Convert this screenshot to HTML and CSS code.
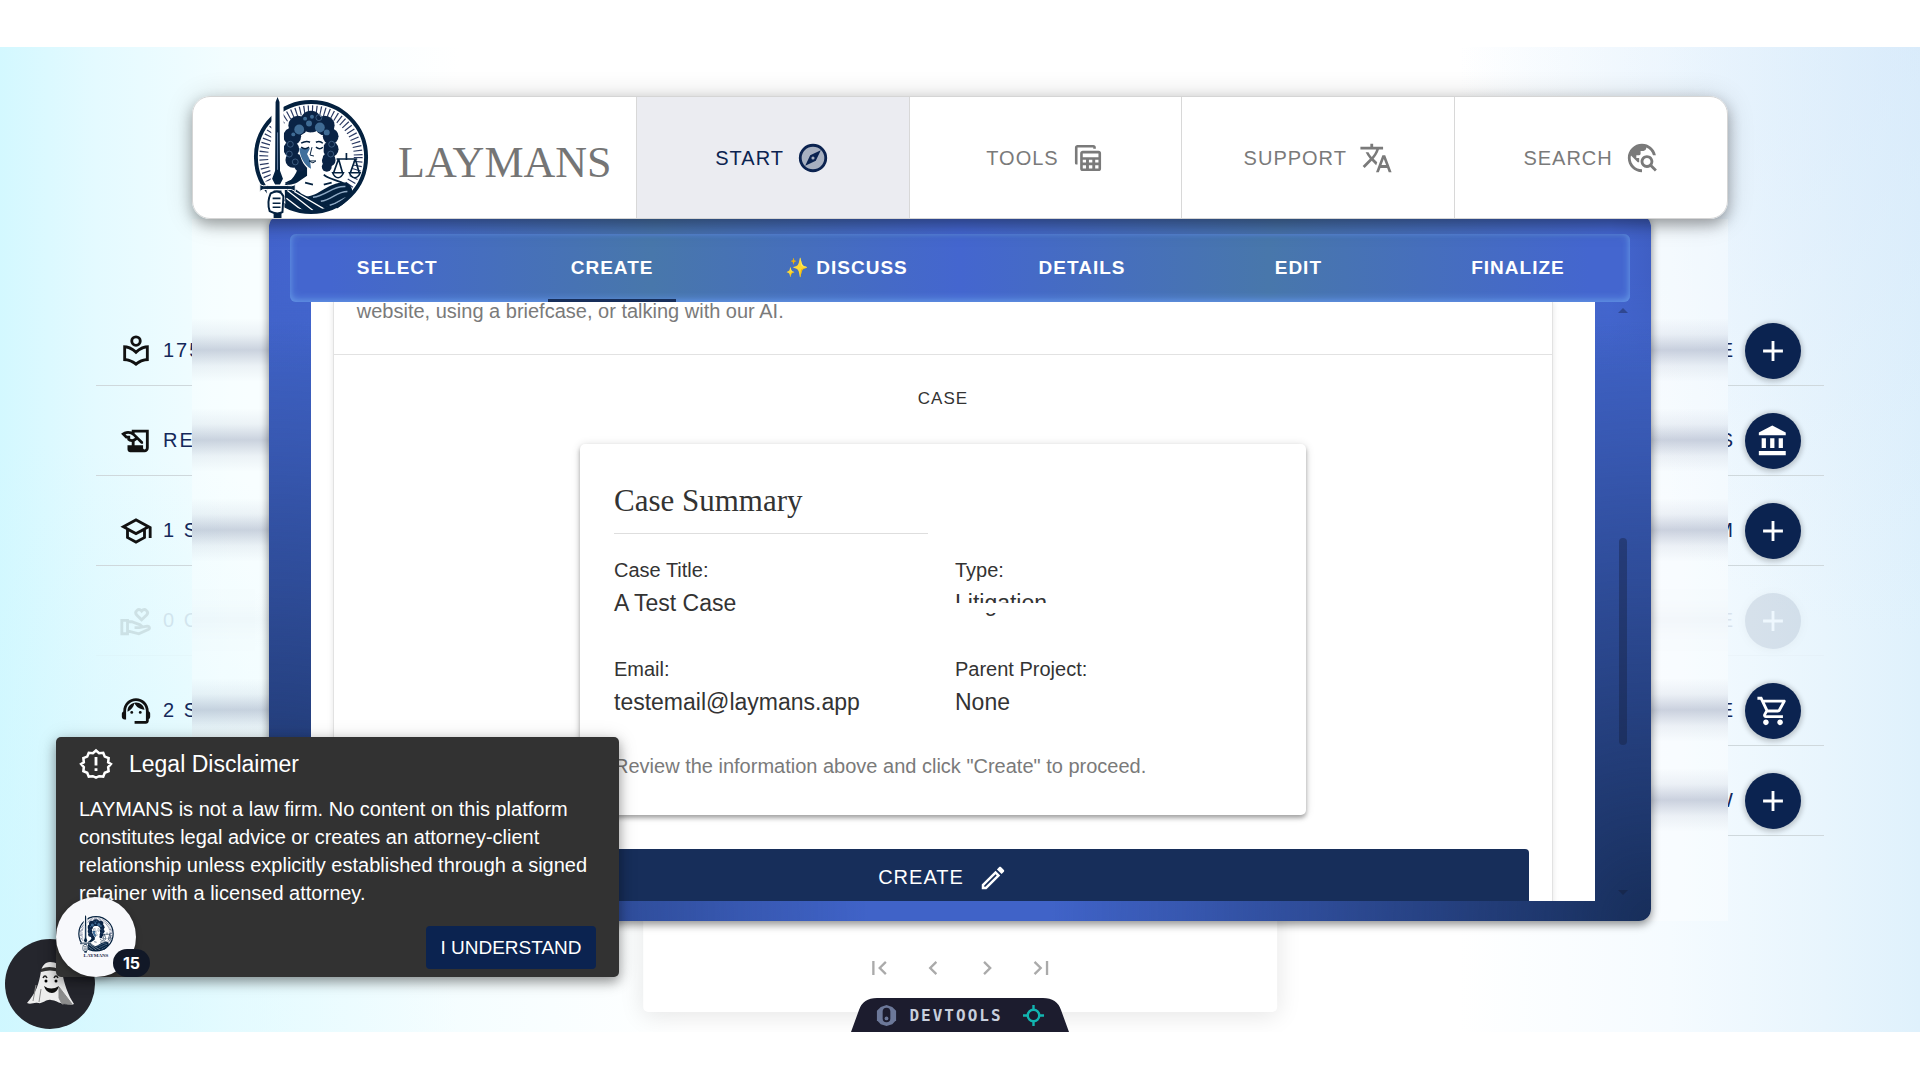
FILE: index.html
```
<!DOCTYPE html>
<html lang="en">
<head>
	<meta charset="utf-8">
	<meta name="viewport" content="width=device-width,initial-scale=1">
	<title>Laymans</title>
	<link rel="stylesheet" href="styles.css">
</head>
<body>

<!-- shared symbols -->
<svg class="symbols" aria-hidden="true">
	<symbol id="plus" viewBox="0 0 24 24"><path d="M19 13h-6v6h-2v-6H5v-2h6V5h2v6h6z"/></symbol>
	<symbol id="seal" viewBox="0 0 124 124">
		<circle cx="62" cy="61" r="56" fill="#fff"/>
		<circle cx="62" cy="61" r="48" fill="none" stroke="#2b3a63" stroke-width="9" stroke-dasharray="1.200 3"/>
		<circle cx="62" cy="61" r="42" fill="#fff"/>
		<!-- shoulders and robe -->
		<path d="M33 88c8-7 17-7 23-11l15-1c8 6 20 5 28 14l3 4-8 12-30 10-28-8z" fill="#fff"/>
		<path d="M35 91c6-1 11 2 17 7l32 16c-18 6-36 4-48-5z" fill="#04213f"/>
		<path d="M56 101c14 1 22-15 42-14 5 3 8 8 4 14-4 6-8 9-13 12-12 0-24-5-33-12z" fill="#04213f"/>
		<path d="M38 95l28 22M37 103l17 13M45 96l34 20" fill="none" stroke="#fff" stroke-width="1.300"/>
		<path d="M64 102c14-2 20-12 33-11M72 106c12-2 16-10 27-10M81 110c9-2 12-7 18-8" fill="none" stroke="#8fa9c4" stroke-width="1.500"/>
		<path d="M36 88c7-5 16-4 21-9M75 79c5 5 14 5 22 10M56 87l8 2M75 89l8-2" fill="none" stroke="#04213f" stroke-width="1.800"/>
		<path d="M50 58l8 14v8l-10 7c-6 3-10 2-14 3 12-6 17-18 16-32z" fill="#04213f"/>
		<!-- hair -->
		<g fill="#0a2345">
			<circle cx="62" cy="25" r="11"/><circle cx="49" cy="29" r="10"/><circle cx="76" cy="29" r="10"/>
			<circle cx="43" cy="40" r="9"/><circle cx="82" cy="40" r="8"/><circle cx="42" cy="53" r="8"/>
			<circle cx="82" cy="53" r="8"/><circle cx="44" cy="64" r="8"/><circle cx="80" cy="64" r="7"/>
			<circle cx="51" cy="70" r="6"/><circle cx="78" cy="71" r="5"/>
		</g>
		<g fill="#3f6b94">
			<circle cx="50" cy="33" r="5"/><circle cx="60" cy="27" r="3"/><circle cx="71" cy="31" r="5"/>
			<circle cx="78" cy="36" r="3"/><circle cx="63" cy="20" r="2"/><circle cx="56" cy="22" r="2"/><circle cx="44" cy="38" r="2"/>
		</g>
		<g fill="none" stroke="#46678c" stroke-width=".8">
			<circle cx="41" cy="48" r="3"/><circle cx="40" cy="58" r="3"/><circle cx="46" cy="66" r="3"/>
			<circle cx="83" cy="48" r="3"/><circle cx="82" cy="58" r="3"/><circle cx="70" cy="21" r="3"/>
		</g>
		<!-- face -->
		<path d="M50 48c2-6 7-9 13-12 6 4 12 7 12 15 0 13-4 21-11 24-8-2-13-11-14-21z" fill="#fff"/>
		<path d="M50 52c1 9 5 17 12 21l-1-9-3-6 3-6z" fill="#3f6f9c"/>
		<path d="M52 47q5-3 9-1M67 46q4-2 7 1M52 51q4 3 8 0M67 51q4 3 7 0" fill="none" stroke="#04213f" stroke-width="1.500"/>
		<path d="M63 51l-2 8 4 1M60 65h7l-3 2z" fill="none" stroke="#04213f"/>
		<path d="M60 75l1 8 11-1v-11l-7 5z" fill="#fff"/>
		<!-- scales -->
		<path d="M98 57v7M88 63h21M90 63l-5 14M90 63l4 14M107 63l-5 14M107 63l4 14" fill="none" stroke="#04213f" stroke-width="1.700"/>
		<path d="M84 77h11q-2 5-5.500 5T84 77zM101 77h11q-2 5-5.500 5t-5.500-5z" fill="#fff" stroke="#04213f" stroke-width="1.600"/>
		<circle cx="62" cy="61" r="56" fill="none" stroke="#04213f" stroke-width="4"/>
		<!-- sword and hand -->
		<path d="M24 4l4-4 4 4 1 84v36H22l-4-36h5z" fill="#fff" stroke="#fff" stroke-width="4"/>
		<path d="M26 5l2-5 2 5 .5 70 3 8-3 6h-5l-3-6 3-8z" fill="#04213f"/>
		<path d="M28 36v38" stroke="#6d87a8" stroke-width="1"/>
		<path d="M10 89q3 2 8 1h20q5 1 8-1v7q-4-3-8-2H18q-5-1-8 2z" fill="#04213f" stroke="#fff" stroke-width="1"/>
		<path d="M24 95h8v28h-8z" fill="#04213f"/>
		<path d="M21 98q7-4 11 0l2 3-1 16q-6 3-13-1-3-9 1-18z" fill="#fff" stroke="#04213f" stroke-width="2"/>
		<path d="M23 103h8M23 108h8M23 112h8" stroke="#04213f" stroke-width="1.600"/>
	</symbol>
</svg>

<main class="stage">

	<header class="navbar">
		<a class="brand" href="#">
			<svg class="brand-logo" aria-hidden="true"><use href="#seal"/></svg>
			<span class="brand-name">LAYMANS</span>
		</a>
		<button class="nav-item active" type="button">START
			<svg class="icon" viewBox="0 0 24 24"><circle cx="12" cy="12" r="9" fill-opacity=".3" stroke-width="2" stroke="currentColor"/><path fill-rule="evenodd" d="M6.500 17.500l3.510-7.490L17.500 6.500l-3.510 7.490zM12 10.900a1.100 1.100 0 1 0 0 2.200 1.100 1.100 0 0 0 0-2.200z"/></svg>
		</button>
		<button class="nav-item" type="button">TOOLS
			<svg class="icon" viewBox="-1 -1 26 26"><path d="M4 17H3a1 1 0 0 1-1-1V4c0-1.100.9-2 2-2h12a2 2 0 0 1 2 2v1h-2V4H4z"/><path fill-rule="evenodd" d="M8 6.500h12a2 2 0 0 1 2 2V20a2 2 0 0 1-2 2H8a2 2 0 0 1-2-2V8.500c0-1.100.9-2 2-2zm0 2v3h12v-3zm0 4.800v2.200h2.500v-2.200zm4.700 0v2.200h2.600v-2.200zm4.800 0v2.200H20v-2.200zM8 17.600V20h2.500v-2.400zm4.700 0V20h2.600v-2.400zm4.800 0V20H20v-2.400z"/></svg>
		</button>
		<button class="nav-item" type="button">SUPPORT
			<svg class="icon" viewBox="0 0 24 24"><path d="M12.870 15.070l-2.540-2.510.03-.03c1.740-1.940 2.980-4.170 3.710-6.530H17V4h-7V2H8v2H1v1.990h11.170C11.500 7.920 10.440 9.750 9 11.350 8.070 10.320 7.300 9.190 6.690 8h-2c.73 1.630 1.730 3.170 2.980 4.560l-5.090 5.020L4 19l5-5 3.110 3.110.76-2.040zM18.500 10h-2L12 22h2l1.120-3h4.750L21 22h2l-4.500-12zm-2.620 7l1.620-4.330L19.120 17h-3.240z"/></svg>
		</button>
		<button class="nav-item" type="button">SEARCH
			<svg class="icon" viewBox="0 0 24 24"><path d="M19.300 16.900c.4-.7.7-1.500.7-2.400 0-2.500-2-4.500-4.500-4.500S11 12 11 14.500s2 4.500 4.500 4.500c.9 0 1.700-.3 2.400-.7l3.200 3.200 1.400-1.400-3.200-3.200zm-3.800.1c-1.400 0-2.500-1.100-2.500-2.500s1.100-2.500 2.500-2.500 2.500 1.100 2.500 2.500-1.100 2.500-2.500 2.500zM12 20v2C6.480 22 2 17.520 2 12S6.480 2 12 2c4.840 0 8.870 3.440 9.800 8h-2.070c-.64-2.460-2.400-4.470-4.730-5.410V5c0 1.100-.9 2-2 2h-2v2c0 .55-.45 1-1 1H8v2h2v3H9l-4.790-4.790C4.080 10.790 4 11.380 4 12c0 4.410 3.590 8 8 8z"/></svg>
		</button>
	</header>

	<div class="frost"></div>

	<div class="lists">
		<ul class="list">
			<li><svg class="icon" viewBox="0 0 24 24"><circle cx="12" cy="5" r="3" fill="none" stroke="currentColor" stroke-width="2"/><path d="M12 11.550C9.640 9.350 6.480 8 3 8v11c3.480 0 6.640 1.350 9 3.550 2.360-2.190 5.520-3.550 9-3.550V8c-3.480 0-6.640 1.350-9 3.550zm7 5.580c-2.530.34-4.930 1.300-7 2.820-2.060-1.520-4.470-2.490-7-2.830v-6.950c2.100.38 4.050 1.350 5.640 2.830L12 14.280l1.360-1.270c1.590-1.480 3.540-2.450 5.640-2.830z"/></svg><span class="label">175</span></li>
			<li><svg class="icon" viewBox="0 0 24 24"><path d="M9 4v1.380c-.83-.33-1.720-.5-2.610-.5-1.790 0-3.580.68-4.950 2.050l3.330 3.330h1.110v1.110c.86.86 1.980 1.310 3.110 1.360V15H6v3c0 1.100.9 2 2 2h10c1.660 0 3-1.340 3-3V4H9zm-1.110 6.410V8.260H5.610L4.570 7.220a5.070 5.070 0 0 1 1.820-.34c1.340 0 2.590.52 3.540 1.460l1.410 1.410-.2.2c-.51.51-1.190.8-1.920.8-.47 0-.93-.12-1.330-.34zM19 17c0 .55-.45 1-1 1s-1-.45-1-1v-2h-6v-2.590c.57-.23 1.100-.57 1.560-1.030l.2-.2L15.590 14H17v-1.410l-6-5.970V6h8v11z"/></svg><span class="label">RE</span></li>
			<li><svg class="icon" viewBox="0 0 24 24"><path d="M12 3L1 9l4 2.180v6L12 21l7-3.820v-6l2-1.090V17h2V9L12 3zm6.820 6L12 12.720 5.180 9 12 5.280 18.820 9zM17 15.990l-5 2.730-5-2.730v-3.720L12 15l5-2.730v3.720z"/></svg><span class="label">1 S</span></li>
			<li class="off"><svg class="icon" viewBox="0 0 24 24"><path d="M2 11.500h4V21H2zM6 12.500h3l6 2.200c1.200.6.900 2-.4 2H11M15 16.500l5-.9c1.500 0 2 1.600 1 2.200l-7 3.200-8-2M16 11.200l-3.500-3.400c-2-2.400 1.200-5.300 3.500-2.800 2.300-2.500 5.500.4 3.500 2.800z" fill="none" stroke="currentColor" stroke-width="2"/></svg><span class="label">0 C</span></li>
			<li><svg class="icon" viewBox="0 0 24 24"><path d="M21 12.220C21 6.730 16.740 3 12 3c-4.690 0-9 3.650-9 9.280-.6.34-1 .98-1 1.720v2c0 1.100.9 2 2 2h1v-6.100c0-3.870 3.130-7 7-7s7 3.130 7 7V19h-8v2h8c1.100 0 2-.9 2-2v-1.220c.59-.31 1-.92 1-1.640v-2.300c0-.7-.41-1.310-1-1.620z"/><circle cx="9" cy="13" r="1"/><circle cx="15" cy="13" r="1"/><path d="M18 11.030C17.520 8.180 15.040 6 12.050 6c-3.030 0-6.290 2.510-6.030 6.450 2.470-1.010 4.330-3.210 4.860-5.890 1.310 2.630 4 4.440 7.120 4.470z"/></svg><span class="label">2 S</span></li>
		</ul>
		<ul class="list list-right">
			<li><span class="label">E</span><button type="button" aria-label="Add"><svg class="icon"><use href="#plus"/></svg></button></li>
			<li><span class="label">S</span><button type="button" aria-label="Bank"><svg class="icon" viewBox="0 0 24 24"><path d="M4 10v7h3v-7H4zm6 0v7h3v-7h-3zM2 22h19v-3H2v3zm14-12v7h3v-7h-3zm-4.500-9L2 6v2h19V6l-9.500-5z"/></svg></button></li>
			<li><span class="label">M</span><button type="button" aria-label="Add"><svg class="icon"><use href="#plus"/></svg></button></li>
			<li class="off"><span class="label">E</span><button type="button" aria-label="Add" disabled><svg class="icon"><use href="#plus"/></svg></button></li>
			<li><span class="label">E</span><button type="button" aria-label="Cart"><svg class="icon" viewBox="0 0 24 24"><path d="M15.550 13c.75 0 1.410-.41 1.750-1.030l3.580-6.490c.37-.66-.11-1.480-.87-1.480H5.210l-.94-2H1v2h2l3.600 7.590-1.350 2.440C4.520 15.370 5.480 17 7 17h12v-2H7l1.100-2h7.450zM6.160 6h12.150l-2.760 5H8.530L6.160 6zM7 18c-1.100 0-1.990.9-1.990 2S5.900 22 7 22s2-.9 2-2-.9-2-2-2zm10 0c-1.100 0-1.990.9-1.990 2s.89 2 1.990 2 2-.9 2-2-.9-2-2-2z"/></svg></button></li>
			<li><span class="label">W</span><button type="button" aria-label="Add"><svg class="icon"><use href="#plus"/></svg></button></li>
		</ul>
	</div>

	<nav class="pager" aria-label="Pages">
		<button type="button" aria-label="First"><svg viewBox="0 0 24 24"><path d="M18.410 16.590L13.820 12l4.590-4.590L17 6l-6 6 6 6zM6 6h2v12H6z"/></svg></button>
		<button type="button" aria-label="Previous"><svg viewBox="0 0 24 24"><path d="M15.410 7.410L14 6l-6 6 6 6 1.410-1.410L10.830 12z"/></svg></button>
		<button type="button" aria-label="Next"><svg viewBox="0 0 24 24"><path d="M10 6L8.590 7.410 13.170 12l-4.580 4.590L10 18l6-6z"/></svg></button>
		<button type="button" aria-label="Last"><svg viewBox="0 0 24 24"><path d="M5.590 7.410L10.180 12l-4.590 4.590L7 18l6-6-6-6zM16 6h2v12h-2z"/></svg></button>
	</nav>

	<section class="dialog">
		<div class="tabs" role="tablist">
			<button type="button" role="tab">SELECT</button>
			<button type="button" role="tab" class="selected" aria-selected="true">CREATE</button>
			<button type="button" role="tab">✨ DISCUSS</button>
			<button type="button" role="tab">DETAILS</button>
			<button type="button" role="tab">EDIT</button>
			<button type="button" role="tab">FINALIZE</button>
		</div>
		<div class="dialog-body">
			<div class="scroller">
				<div class="panel">
					<p class="intro">website, using a briefcase, or talking with our AI.</p>
					<div class="overline">CASE</div>
					<div class="summary">
						<h2>Case Summary</h2>
						<dl>
							<div><dt>Case Title:</dt><dd>A Test Case</dd></div>
							<div><dt>Type:</dt><dd class="masked">Litigation</dd></div>
							<div><dt>Email:</dt><dd>testemail@laymans.app</dd></div>
							<div><dt>Parent Project:</dt><dd>None</dd></div>
						</dl>
						<p>Review the information above and click "Create" to proceed.</p>
					</div>
					<button class="create" type="button">CREATE
						<svg class="icon" viewBox="0 0 24 24"><path d="M14.060 9.020l.92.92L5.920 19H5v-.92l9.060-9.060M17.660 3c-.25 0-.51.1-.7.29l-1.830 1.830 3.750 3.750 1.830-1.830c.39-.39.39-1.020 0-1.410l-2.340-2.340c-.2-.2-.45-.29-.71-.29zm-3.600 3.190L3 17.250V21h3.750L17.810 9.940l-3.750-3.750z"/></svg>
					</button>
				</div>
			</div>
			<div class="scrollbar"><span class="arrow up"></span><span class="thumb"></span><span class="arrow down"></span></div>
		</div>
	</section>

	<button class="ghost" type="button" aria-label="Assistant">
		<svg viewBox="0 0 90 90"><path d="M45 23c-5 0-8 4-9 9-2 13-5 22-14 32 4 2 7-1 11 0 5 1 8-4 13-3 5 0 8 4 13 3 3-1 6 3 10 1-6-9-10-20-12-33-1-6-6-9-12-9z" fill="#ededed"/><path d="M54 48l13 17c-4 1-7-1-10 0l-3-6zM31 46l-3 16M36 50l-2 13" fill="#8c8c8c" stroke="#8c8c8c"/><path d="M36 30q8-4 18 0v3q-9-3-18 0z" fill="#333"/><path d="M38 39q2-4 4 0M49 39q2-4 4 0" fill="none" stroke="#222" stroke-width="1.500"/><circle cx="41" cy="42" r="1.500"/><circle cx="51" cy="42" r="1.500"/><path d="M39 47q7 5 15 0-2 7-7 7-6 0-8-7z" fill="#111"/></svg>
	</button>

	<aside class="disclaimer">
		<h3><svg class="icon" viewBox="0 0 24 24"><path d="M12 2.500l2.200 1.900 2.900-.3 1.100 2.700 2.700 1.100-.3 2.900 1.900 1.200-1.900 2.200.3 2.900-2.700 1.100-1.100 2.700-2.900-.3-2.200 1-2.200-1-2.900.3-1.100-2.700-2.700-1.100.3-2.900L1.500 12l1.900-1.200-.3-2.900 2.700-1.100 1.100-2.700 2.900.3z" fill="none" stroke="currentColor" stroke-width="1.800"/><path d="M11 7h2v6h-2zM11 15h2v2h-2z"/></svg>Legal Disclaimer</h3>
		<p>LAYMANS is not a law firm. No content on this platform constitutes legal advice or creates an attorney-client relationship unless explicitly established through a signed retainer with a licensed attorney.</p>
		<button type="button">I UNDERSTAND</button>
	</aside>

	<button class="chat" type="button">
		<svg class="chat-logo" aria-hidden="true"><use href="#seal"/></svg>
		<span class="chat-name">LAYMANS</span>
		<span class="badge">15</span>
	</button>

	<button class="devtools" type="button">
		<svg viewBox="0 0 22 24"><path d="M11 1l6 2 4 4v10l-4 4-6 2-6-2-4-4V7l4-4z" fill="#6c7899"/><rect x="7" y="4" width="8" height="15" rx="4" fill="#1c1c2e"/><circle cx="11" cy="15" r="2" fill="#6c7899"/></svg>
		DEVTOOLS
		<svg viewBox="0 0 24 24" fill="none" stroke="#12b5b0" stroke-width="2.500"><circle cx="12" cy="12" r="6"/><path d="M12 1v6M12 17v6M1 12h6M17 12h6"/></svg>
	</button>

</main>
</body>
</html>
```
FILE: styles.css
```
:root {
	--navy: #0b2350;
	--deep: #172e5a;
	--blue: #4466cf;
	--teal: #4877ab;
	--text: #333;
	--muted: #7a7a7a;
}

* {
	box-sizing: border-box;
}

body {
	margin: 0;
	padding: 47px 0 48px;
	min-height: 100vh;
	display: flex;
	background: white;
	color: var(--text);
	font-family: "Liberation Sans", Arial, sans-serif;
	font-size: 20px;
}

button {
	border: 0;
	margin: 0;
	padding: 0;
	background: none;
	color: inherit;
	font: inherit;
	cursor: pointer;
}

h2, h3, p, ul, dl, dd {
	margin: 0;
	padding: 0;
}

.symbols {
	position: absolute;
	width: 0;
	height: 0;
}

.icon {
	width: 34px;
	height: 34px;
	fill: currentColor;
	flex: none;
}

.stage {
	position: relative;
	flex: 1;
	padding-top: 49px;
	overflow: hidden;
	background:
		radial-gradient(ellipse 36% 60% at 0 100%, rgba(205, 247, 255, .6), transparent),
		radial-gradient(ellipse 24% 60% at 100% 0, rgba(214, 232, 250, .6), transparent),
		linear-gradient(90deg, #d3f8ff 0, #e4faff 5%, #f3fdff 12%, #fff 24%, #fff 76%, #f5fbff 87%, #e8f5fd 95%, #dff1fc 100%);
}

/* top bar */
.navbar {
	position: relative;
	z-index: 3;
	display: grid;
	grid-template-columns: 443fr repeat(4, 273fr);
	width: 80%;
	height: 123px;
	margin: 0 auto;
	background: white;
	border: 1px solid #d5d5d5;
	border-radius: 18px;
	overflow: hidden;
}
.stage::before {
	content: "";
	position: absolute;
	z-index: 2;
	top: 49px;
	left: 10%;
	width: 80%;
	height: 123px;
	border-radius: 18px;
	box-shadow: 0 6px 14px rgba(0, 0, 0, .3), 0 2px 28px rgba(0, 0, 0, .16);
}

.brand {
	display: flex;
	align-items: center;
	gap: 25px;
	padding-left: 56px;
	color: #757575;
	text-decoration: none;
}
.brand-logo {
	width: 124px;
	height: 122px;
}
.brand-name {
	padding-top: 8px;
	font-family: "Liberation Serif", serif;
	font-size: 44px;
}

.nav-item {
	display: flex;
	align-items: center;
	justify-content: center;
	gap: 12px;
	border-left: 1px solid #d8d8d8;
	color: var(--muted);
	letter-spacing: 1px;
}
.nav-item.active {
	background: #ebecf1;
	color: var(--navy);
}

.lists {
	position: relative;
	display: flex;
	justify-content: space-between;
	padding: 77px 5% 0;
}
.list {
	width: 5vw;
	list-style: none;
	color: #14285a;
	letter-spacing: 2px;
}
.list li {
	position: relative;
	display: flex;
	align-items: center;
	gap: 10px;
	height: 90px;
	padding: 20px 0 0 23px;
	border-bottom: 1px solid #cfd8dc;
}
.list li::after {
	content: "";
	position: absolute;
	top: 22px;
	left: 100%;
	width: 80px;
	height: 64px;
	background: linear-gradient(transparent, rgba(40, 55, 105, .06) 25%, rgba(40, 55, 105, .22) 50%, rgba(40, 55, 105, .06) 75%, transparent);
}
.label {
	flex: 1;
	overflow: hidden;
	white-space: nowrap;
}
.list .icon {
	color: #111;
}
.list-right li {
	padding: 20px 23px 0 0;
}
.list-right li::after {
	right: 100%;
	left: auto;
}
.list-right .label {
	display: flex;
	justify-content: flex-end;
}
.list-right button {
	display: flex;
	align-items: center;
	justify-content: center;
	flex: none;
	width: 56px;
	height: 56px;
	border-radius: 50%;
	background: var(--navy);
	box-shadow: 0 1px 5px 2px rgba(0, 0, 0, .2);
}
.list-right .icon {
	color: white;
}
.list .off {
	opacity: .1;
}

.frost {
	position: absolute;
	top: 172px;
	right: 10%;
	bottom: 111px;
	left: 10%;
	background: rgba(255, 255, 255, .35);
}

.pager {
	position: absolute;
	left: 50%;
	bottom: 20px;
	width: 33%;
	height: 160px;
	padding-bottom: 30px;
	transform: translateX(-50%);
	display: flex;
	align-items: flex-end;
	justify-content: center;
	gap: 26px;
	border-radius: 5px;
	background: white;
	box-shadow: 0 4px 24px rgba(0, 0, 0, .1);
}
.pager button {
	width: 28px;
	height: 28px;
}
.pager svg {
	display: block;
	fill: #aaa;
}

/* dialog */
.dialog {
	position: absolute;
	z-index: 1;
	top: 168px;
	right: 14%;
	bottom: 111px;
	left: 14%;
	display: flex;
	flex-direction: column;
	padding: 19px 0 20px;
	border-radius: 12px;
	background:
		radial-gradient(circle at 0 100%, var(--deep), transparent 600px),
		radial-gradient(circle at 100% 100%, var(--deep), transparent 600px),
		linear-gradient(transparent 8%, #4063c8 22%),
		linear-gradient(90deg, #4263cc, #4466d0 5%, #4873ac 28%, #4466d0 50%, #4873ac 73%, #4466d0 97%, #3f5fc4);
	box-shadow: 0 4px 8px rgba(0, 0, 0, .35), 0 1px 10px rgba(0, 0, 0, .15);
}

.tabs {
	display: flex;
	justify-content: space-around;
	height: 68px;
	margin: 0 21px;
	border-radius: 6px;
	background: linear-gradient(90deg, var(--blue) 3%, var(--teal) 27%, var(--blue) 50%, var(--teal) 73%, var(--blue) 97%);
	box-shadow: inset 0 -2px 8px #6496e6, inset 0 0 5px #5580d8;
}
.tabs button {
	min-width: 128px;
	padding: 2px 22px 0;
	border-bottom: 3px solid transparent;
	color: white;
	font-size: 19px;
	font-weight: bold;
	letter-spacing: 1px;
}
.tabs .selected {
	border-bottom-color: var(--deep);
}

.dialog-body {
	display: flex;
	flex: 1;
	min-height: 0;
	padding-left: 42px;
}
.scroller {
	flex: 1;
	padding: 0 42px 0 22px;
	overflow: hidden;
	background: white;
}
.panel {
	display: flex;
	flex-direction: column;
	padding: 0 23px 24px;
	border: 1px solid #e2e2e2;
	border-width: 0 1px;
	box-shadow: 0 0 6px rgba(0, 0, 0, .1);
}
.intro {
	margin: 0 -23px;
	padding: 0 23px 34px;
	border-bottom: 1px solid #e2e2e2;
	color: var(--muted);
	line-height: 18px;
}
.overline {
	padding: 32px 0 33px;
	font-size: 17px;
	line-height: 24px;
	letter-spacing: 1px;
	text-align: center;
}

.summary {
	align-self: center;
	width: 100%;
	max-width: 726px;
	padding: 36px 34px 35px;
	border-radius: 5px;
	background: white;
	box-shadow: 0 3px 4px rgba(0, 0, 0, .3), 0 1px 10px rgba(0, 0, 0, .14);
}
.summary h2 {
	width: 314px;
	padding-bottom: 11px;
	border-bottom: 1px solid #dedede;
	font-family: "Liberation Serif", serif;
	font-size: 31px;
	font-weight: normal;
	line-height: 42px;
}
.summary dl {
	display: grid;
	grid-template-columns: 1fr 1fr;
	gap: 34px 24px;
	padding: 20px 0 34px;
}
.summary dt {
	line-height: 33px;
}
.summary dd {
	font-size: 23px;
	line-height: 32px;
}
.summary p {
	color: var(--muted);
	line-height: 28px;
}
/* blank strip running over the value */
.masked {
	position: relative;
}
.masked::after {
	content: "";
	position: absolute;
	top: 16px;
	left: 0;
	right: 0;
	height: 10px;
	background: white;
}

.create {
	display: flex;
	align-items: center;
	justify-content: center;
	gap: 14px;
	height: 57px;
	margin-top: 34px;
	border-radius: 4px;
	background: var(--deep);
	color: white;
	letter-spacing: 1px;
}
.create .icon {
	width: 30px;
	height: 30px;
}

.scrollbar {
	display: flex;
	flex-direction: column;
	align-items: center;
	justify-content: space-between;
	width: 56px;
	padding: 6px 0;
}
.thumb {
	width: 8px;
	height: 207px;
	margin-top: 80px;
	border-radius: 4px;
	background: rgba(20, 30, 60, .4);
}
.arrow {
	border: 5px solid transparent;
}
.up {
	border-top: 0;
	border-bottom-color: rgba(20, 30, 60, .4);
}
.down {
	border-bottom: 0;
	border-top-color: rgba(20, 30, 60, .5);
}

/* floating widgets */
.disclaimer {
	position: absolute;
	z-index: 5;
	left: 56px;
	bottom: 55px;
	display: flex;
	flex-direction: column;
	width: 563px;
	padding: 10px 23px 8px;
	border-radius: 5px;
	background: #323232;
	color: white;
	box-shadow: 0 5px 12px rgba(0, 0, 0, .35), 0 2px 20px rgba(0, 0, 0, .15);
}
.disclaimer h3 {
	display: flex;
	align-items: center;
	gap: 16px;
	font-size: 23px;
	font-weight: normal;
}
.disclaimer p {
	padding: 14px 0 19px;
	line-height: 28px;
}
.disclaimer button {
	align-self: flex-end;
	width: 170px;
	height: 43px;
	border-radius: 4px;
	background: var(--navy);
	font-size: 19px;
}

.ghost {
	position: absolute;
	z-index: 4;
	left: 5px;
	bottom: 3px;
	width: 90px;
	height: 90px;
	border-radius: 50%;
	background: #25262d;
}
.ghost svg {
	display: block;
}

.chat {
	position: absolute;
	z-index: 6;
	left: 56px;
	bottom: 55px;
	display: flex;
	flex-direction: column;
	align-items: center;
	justify-content: center;
	width: 80px;
	height: 80px;
	border-radius: 50%;
	background: #f8f9fc;
	box-shadow: 0 2px 6px rgba(0, 0, 0, .3);
}
.chat-logo {
	width: 38px;
	height: 38px;
}
.chat-name {
	color: #1d2b4d;
	font-family: "Liberation Serif", serif;
	font-size: 5px;
	font-weight: bold;
	line-height: 6px;
}
.badge {
	position: absolute;
	left: 57px;
	bottom: 0;
	width: 37px;
	border-radius: 14px;
	background: #111827;
	color: white;
	font-family: Inter, sans-serif;
	font-size: 16px;
	font-weight: bold;
	line-height: 28px;
}

.devtools {
	position: absolute;
	z-index: 4;
	left: 50%;
	bottom: 0;
	transform: translateX(-50%);
	display: flex;
	align-items: center;
	justify-content: center;
	gap: 11px;
	width: 218px;
	height: 34px;
	background: #1c1c2e;
	clip-path: path("M0 34 L8 12 Q12 0 26 0 L192 0 Q206 0 210 12 L218 34 Z");
	color: #c8cfdc;
	font-family: "DejaVu Sans Mono", monospace;
	font-size: 16px;
	font-weight: bold;
	letter-spacing: 2px;
}
.devtools svg {
	flex: none;
	width: 23px;
	height: 23px;
}
.devtools svg:last-child {
	margin-left: 8px;
}
```
